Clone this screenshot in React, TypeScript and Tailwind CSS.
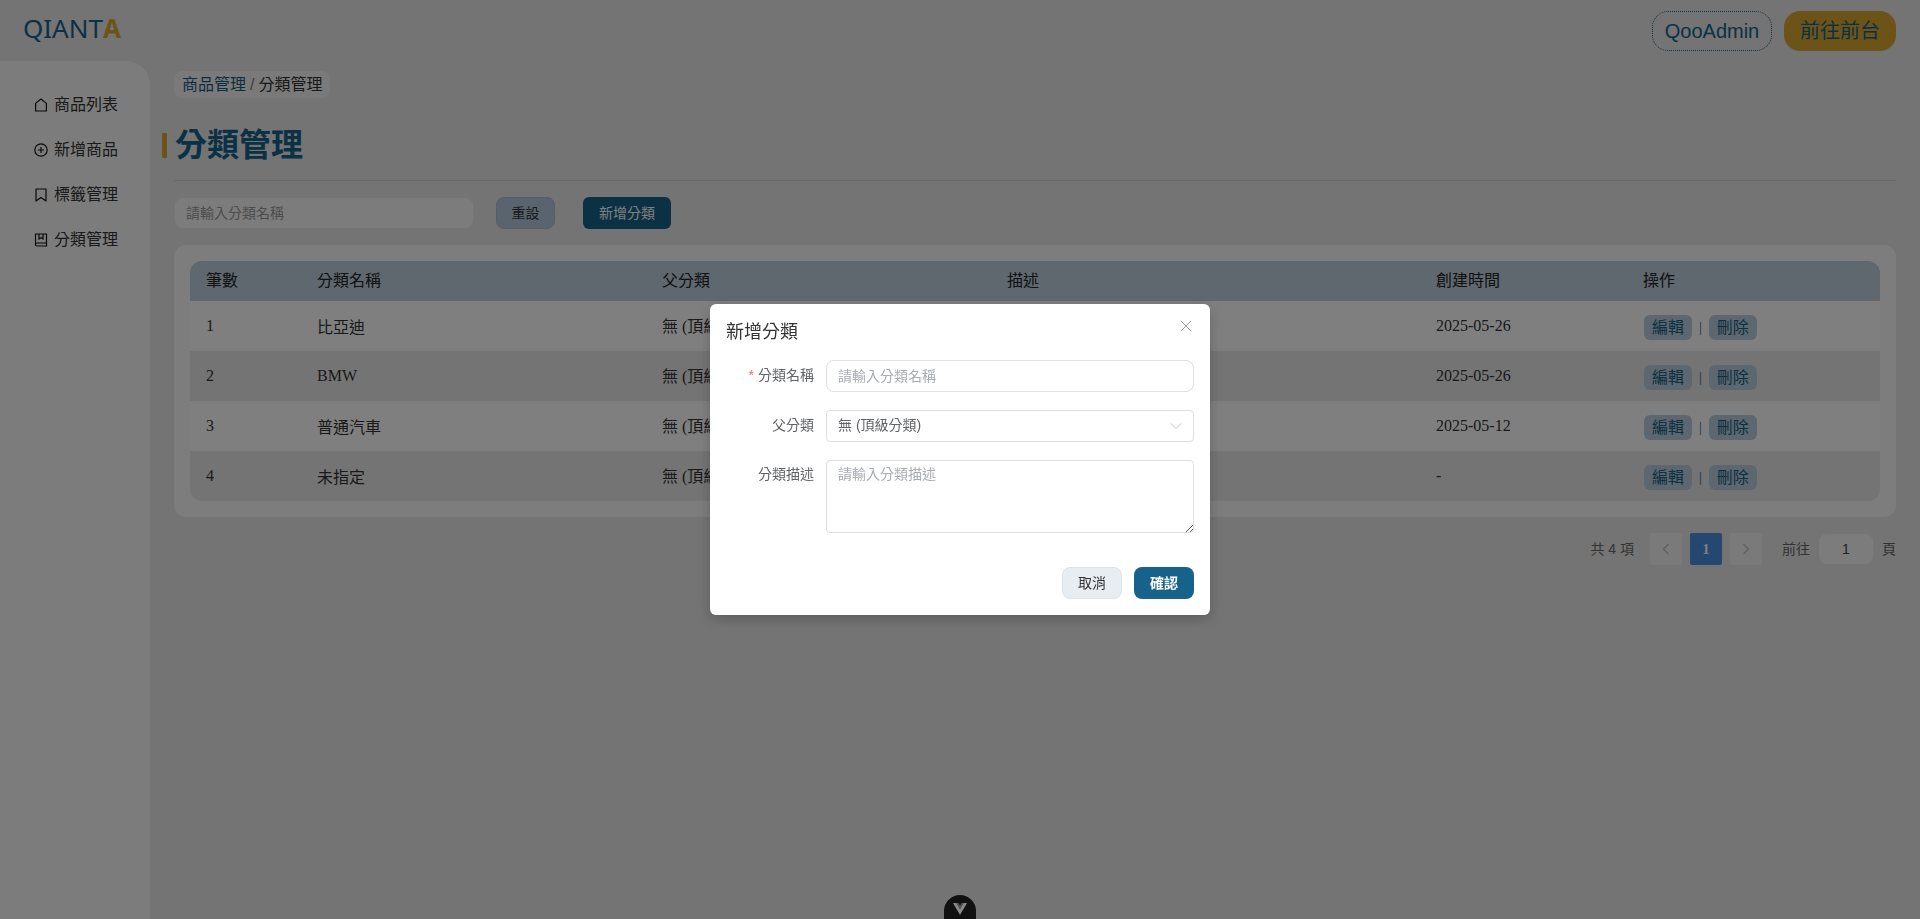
const navItems = [
  { label: '商品列表', icon: 'home' },
  { label: '新增商品', icon: 'plus' },
  { label: '標籤管理', icon: 'tag' },
  { label: '分類管理', icon: 'book' },
];

const rows = [
  { id: 1, name: '比亞迪', date: '2025-05-26' },
  { id: 2, name: 'BMW', date: '2025-05-26' },
  { id: 3, name: '普通汽車', date: '2025-05-12' },
  { id: 4, name: '未指定', date: '-' },
];

function NavIcon({ name }: { name: string }) {
  return (
    <svg width="14" height="14" viewBox="0 0 14 14" fill="none" stroke="#111" strokeWidth="1.2" className="shrink-0">
      {name === 'home' && <path d="M1.6 13V5.4L7 1l5.4 4.4V13z" strokeLinejoin="round" />}
      {name === 'plus' && (
        <>
          <circle cx="7" cy="7" r="6.2" />
          <path d="M7 4v6M4 7h6" />
        </>
      )}
      {name === 'tag' && <path d="M2 1h10v12L7 9.6 2 13z" strokeLinejoin="round" />}
      {name === 'book' && (
        <>
          <path d="M1.5 11.500V1h11v12H3a1.500 1.500 0 0 1-1.500-1.500A1.500 1.500 0 0 1 3 10h9.500" />
          <path d="M5 1v5l2-1.300L9 6V1" />
        </>
      )}
    </svg>
  );
}

function Sidebar() {
  return (
    <aside className="w-[150px] shrink-0 rounded-tr-[24px] bg-[#f8f8f8] pt-[21px]">
      {navItems.map((item) => (
        <div key={item.label} className="flex h-[45px] items-center gap-[6px] pl-[34px] text-[16px] text-[#333]">
          <NavIcon name={item.icon} />
          {item.label}
        </div>
      ))}
    </aside>
  );
}

function Table() {
  return (
    <div className="rounded-[12px] bg-[#fafafa] p-[16px]">
      <table className="w-full table-fixed border-collapse overflow-hidden rounded-[12px] text-left text-[16px] text-[#333] [font-family:'Liberation_Serif','Noto_Sans_CJK_TC',serif]">
        <colgroup>
          <col className="w-[111px]" />
          <col className="w-[345px]" />
          <col className="w-[345px]" />
          <col className="w-[429px]" />
          <col className="w-[207px]" />
          <col />
        </colgroup>
        <thead>
          <tr className="h-[40px] bg-[#becfdf] text-[#222]">
            <th className="pl-[16px] font-normal">筆數</th>
            <th className="pl-[16px] font-normal">分類名稱</th>
            <th className="pl-[16px] font-normal">父分類</th>
            <th className="pl-[16px] font-normal">描述</th>
            <th className="pl-[16px] font-normal">創建時間</th>
            <th className="pl-[16px] font-normal">操作</th>
          </tr>
        </thead>
        <tbody>
          {rows.map((row) => (
            <tr key={row.id} className="h-[50px] odd:bg-[#ffffff] even:bg-[#e8e8e8]">
              <td className="pl-[16px]">{row.id}</td>
              <td className={row.name === 'BMW' ? 'pl-[16px]' : 'pl-[16px] pt-[3px]'}>{row.name}</td>
              <td className="pl-[16px] pt-[2px]">無 (頂級分類)</td>
              <td className="pl-[16px]"></td>
              <td className="pl-[16px]">{row.date}</td>
              <td className="pl-[17px]">
                <div className="mt-[3px] flex items-center gap-[7px] text-[#1a5f85]">
                  <span className="flex h-[25px] w-[48px] items-center justify-center rounded-[6px] bg-[#b9cfe0] text-[16px]">編輯</span>
                  <span className="text-[14px]">|</span>
                  <span className="flex h-[25px] w-[48px] items-center justify-center rounded-[6px] bg-[#b9cfe0] text-[16px]">刪除</span>
                </div>
              </td>
            </tr>
          ))}
        </tbody>
      </table>
    </div>
  );
}

function Pagination() {
  return (
    <div className="mt-[16px] flex items-center justify-end text-[14px] text-[#666]">
      <span className="mr-[16px]">共 4 項</span>
      <div className="flex gap-[8px]">
        <span className="flex h-[32px] w-[32px] items-center justify-center rounded-[2px] bg-[#f5f5f5] text-[#bbb]">
          <svg width="10" height="12" viewBox="0 0 10 12" fill="none" stroke="currentColor" strokeWidth="1.2"><path d="M7.500 1 2.500 6l5 5" /></svg>
        </span>
        <span className="flex h-[32px] w-[32px] items-center justify-center rounded-[2px] bg-[#4a90e2] font-bold text-white [font-family:'Liberation_Serif',serif]">1</span>
        <span className="flex h-[32px] w-[32px] items-center justify-center rounded-[2px] bg-[#f5f5f5] text-[#bbb]">
          <svg width="10" height="12" viewBox="0 0 10 12" fill="none" stroke="currentColor" strokeWidth="1.2"><path d="m2.500 1 5 5-5 5" /></svg>
        </span>
      </div>
      <span className="ml-[20px]">前往</span>
      <span className="mx-[9px] flex h-[30px] w-[54px] items-center justify-center rounded-[8px] bg-[#f8f8f8] text-[#444]">1</span>
      <span>頁</span>
    </div>
  );
}

function Modal() {
  return (
    <div className="fixed inset-0 bg-black/50">
      <div className="absolute left-[710px] top-[304px] w-[500px] rounded-[6px] bg-white p-[16px] shadow-[0_4px_14px_rgba(0,0,0,0.2)]">
        <div className="flex items-center justify-between">
          <span className="text-[18px] leading-[24px] text-[#333]">新增分類</span>
          <svg width="12" height="12" viewBox="0 0 12 12" fill="none" stroke="#999" strokeWidth="1" className="mb-[12px] mr-[2px]"><path d="M1 1l10 10M11 1 1 11" /></svg>
        </div>
        <div className="mt-[16px] flex flex-col gap-[18px] text-[14px]">
          <div className="flex items-center">
            <label className="w-[100px] whitespace-nowrap pb-[2px] pr-[12px] text-right text-[#606266]"><span className="mr-[4px] text-[#f56c6c]">*</span>分類名稱</label>
            <div className="flex h-[32px] flex-1 items-center rounded-[8px] border border-[#dcdfe6] px-[11px] text-[#a8abb2]">請輸入分類名稱</div>
          </div>
          <div className="flex items-center">
            <label className="w-[100px] pb-[2px] pr-[12px] text-right text-[#606266]">父分類</label>
            <div className="flex h-[32px] flex-1 items-center justify-between rounded-[4px] border border-[#dcdfe6] pb-[1px] pl-[11px] pr-[11px] text-[#606266]">
              無 (頂級分類)
              <svg width="12" height="8" viewBox="0 0 12 8" fill="none" stroke="#c0c4cc" strokeWidth="1"><path d="M1 1.500 6 6.500l5-5" /></svg>
            </div>
          </div>
          <div className="flex items-start">
            <label className="w-[100px] pr-[12px] pt-[4px] text-right text-[#606266]">分類描述</label>
            <div className="relative h-[73px] flex-1 rounded-[4px] border border-[#dcdfe6] px-[11px] py-[3px] text-[#a8abb2]">
              請輸入分類描述
              <svg width="8" height="8" viewBox="0 0 8 8" stroke="#555" strokeWidth="1" className="absolute bottom-0 right-0"><path d="M1 8l7-7M5 8l3-3" /></svg>
            </div>
          </div>
        </div>
        <div className="mt-[34px] flex justify-end gap-[12px] text-[14px]">
          <span className="flex h-[32px] w-[60px] items-center justify-center rounded-[8px] border border-[#dfe3eb] bg-[#e8ecf3] text-[#333]">取消</span>
          <span className="flex h-[32px] w-[60px] items-center justify-center rounded-[8px] bg-[#16628b] font-bold text-white">確認</span>
        </div>
      </div>
      <div className="absolute bottom-[-10px] left-[944px] flex h-[34px] w-[32px] items-start justify-center rounded-t-[16px] bg-[#111] pt-[8px]">
        <svg width="14" height="12" viewBox="0 0 14 12"><path d="M0 0h3.500L7 6l3.500-6H14L7 12z" fill="#888" /><path d="M3.500 0h2L7 2.700 8.500 0h2L7 6z" fill="#555" /></svg>
      </div>
    </div>
  );
}

export default function App() {
  return (
    <div className="flex h-screen flex-col overflow-hidden bg-[#e8e8e8] [font-family:'Liberation_Sans','Noto_Sans_CJK_TC',sans-serif]">
      <header className="flex h-[61px] shrink-0 items-center justify-between pl-[23px] pr-[24px]">
        <div className="mb-[4px] text-[26px] text-[#16628b] [font-family:'Noto_Sans',sans-serif]">
          QIANT<span className="font-bold text-[#d8a830]">A</span>
        </div>
        <div className="flex items-center gap-[12px] text-[20px] text-[#16628b]">
          <span className="flex h-[40px] w-[120px] items-center justify-center rounded-[16px] border border-dotted border-[#16628b]">QooAdmin</span>
          <span className="flex h-[40px] w-[112px] items-center justify-center rounded-[16px] bg-[#d8a830]">前往前台</span>
        </div>
      </header>
      <div className="flex flex-1">
        <Sidebar />
        <main className="flex-1 px-[24px] pt-[10px]">
          <div className="inline-flex h-[27px] items-center rounded-[8px] bg-[#f4f4f4] px-[8px] text-[16px] text-[#333]">
            <span className="text-[#1d5d80]">商品管理</span>
            <span className="mx-[4px] text-[#777]">/</span>
            <span>分類管理</span>
          </div>
          <h1 className="ml-[-12px] mt-[29px] flex h-[36px] items-center gap-[8px] text-[32px] font-bold text-[#16628b]">
            <span className="h-[25px] w-[5px] rounded-[1px] bg-[#d8a830]"></span>
            分類管理
          </h1>
          <div className="mt-[17px] border-t border-[#d4d4d4]"></div>
          <div className="mt-[16px] flex items-center text-[14px]">
            <div className="ml-[1px] flex h-[30px] w-[298px] items-center rounded-[8px] bg-[#f8f8f8] pl-[11px] text-[#999]">請輸入分類名稱</div>
            <span className="ml-[23px] flex h-[32px] w-[59px] items-center justify-center rounded-[8px] border border-[#a9bed1] bg-[#b4c9dc] text-[#333]">重設</span>
            <span className="ml-[28px] flex h-[32px] w-[88px] items-center justify-center rounded-[6px] bg-[#16628b] text-white">新增分類</span>
          </div>
          <div className="mt-[16px]"><Table /></div>
          <Pagination />
        </main>
      </div>
      <Modal />
    </div>
  );
}
